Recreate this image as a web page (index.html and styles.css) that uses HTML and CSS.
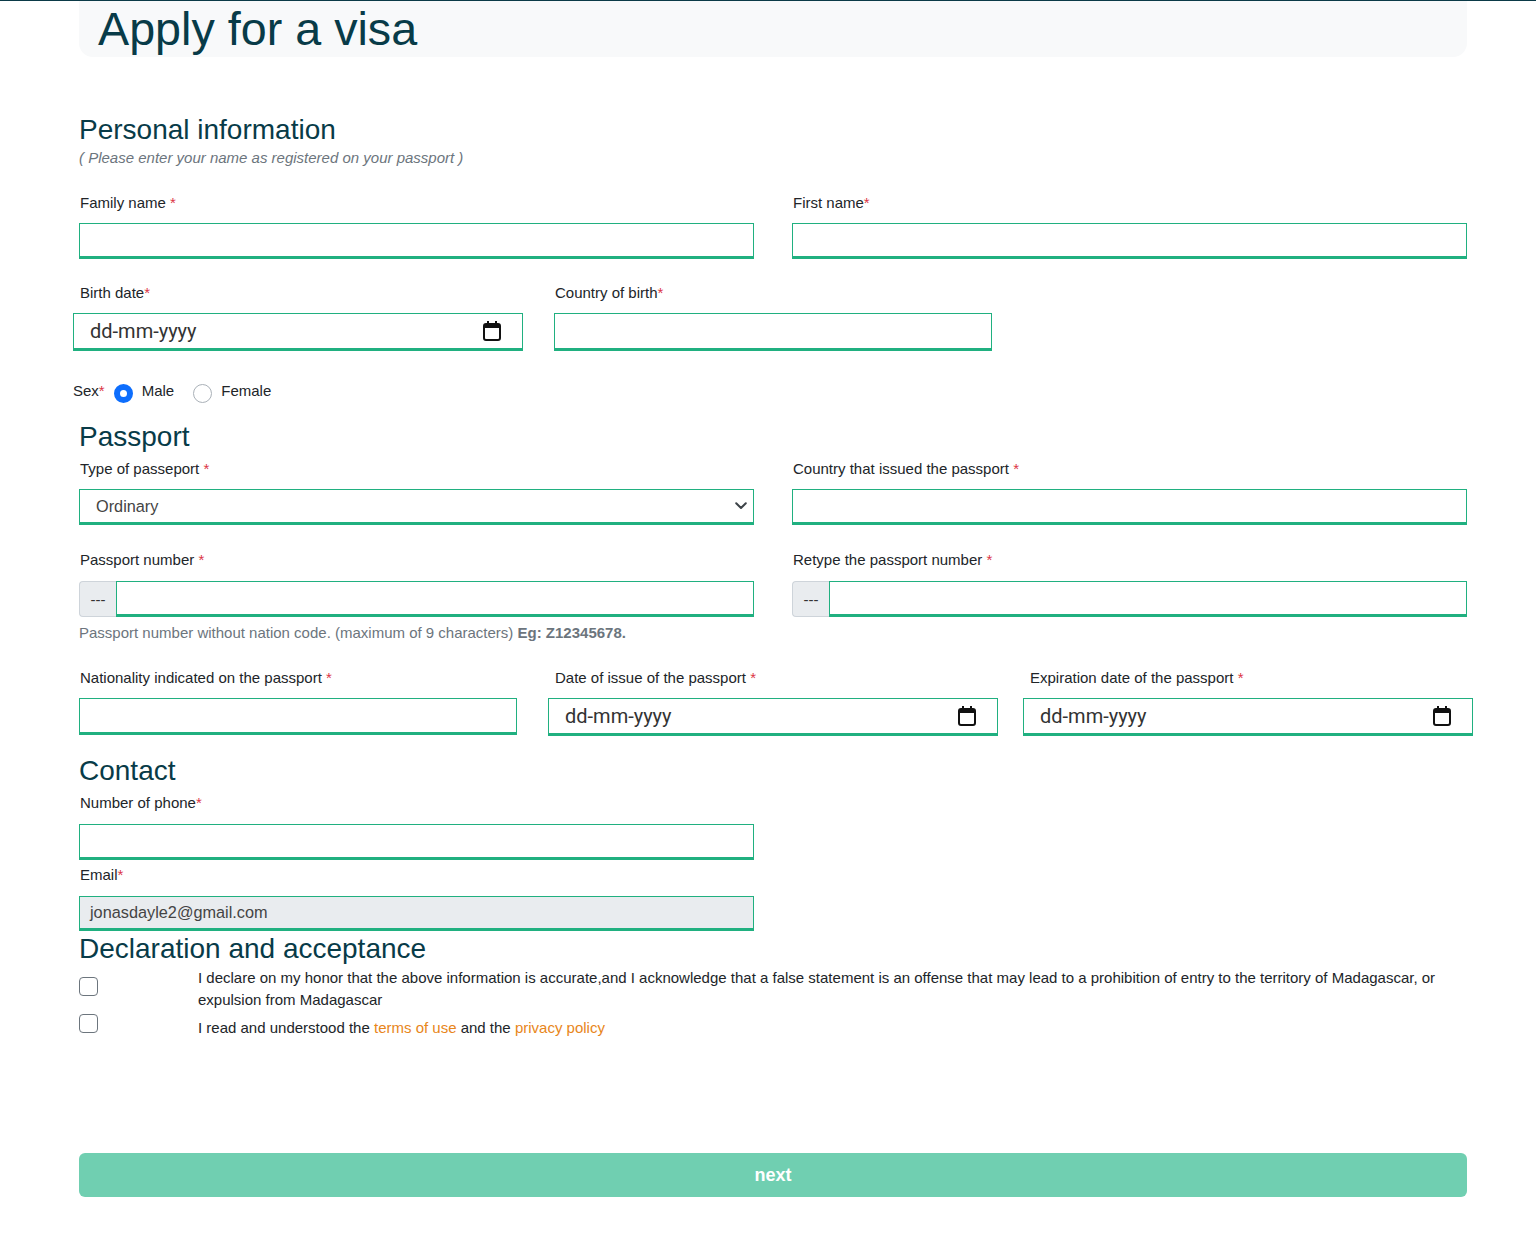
FILE: index.html
```html
<!DOCTYPE html>
<html lang="en">
<head>
<meta charset="utf-8">
<title>Apply for a visa</title>
<link rel="stylesheet" href="styles.css">
</head>
<body>
<div class="topline"></div>
<div class="page">
  <header class="hero"><h1 class="hero-title">Apply for a visa</h1></header>

  <h2 class="sec sec-personal">Personal information</h2>
  <p class="hint">( Please enter your name as registered on your passport )</p>

  <div class="row two r1">
    <div class="col">
      <label class="lbl">Family name <span class="req">*</span></label>
      <div class="field w675"></div>
    </div>
    <div class="col">
      <label class="lbl">First name<span class="req">*</span></label>
      <div class="field w675"></div>
    </div>
  </div>

  <div class="row three r2">
    <div class="col">
      <label class="lbl">Birth date<span class="req">*</span></label>
      <div class="field date">
        <span class="ph">dd-mm-yyyy</span>
        <svg class="cal" width="20" height="22" viewBox="0 0 20 22"><rect x="2" y="4" width="16" height="16" rx="2" fill="none" stroke="#111" stroke-width="2"/><rect x="2" y="4" width="16" height="4" fill="#111"/><rect x="5" y="1" width="2" height="4" fill="#111"/><rect x="13" y="1" width="2" height="4" fill="#111"/></svg>
      </div>
    </div>
    <div class="col">
      <label class="lbl">Country of birth<span class="req">*</span></label>
      <div class="field w438 h38"></div>
    </div>
  </div>

  <div class="sex">
    <span class="sex-lbl">Sex<span class="req">*</span></span>
    <span class="radio on"></span><span class="opt">Male</span>
    <span class="radio"></span><span class="opt">Female</span>
  </div>

  <h2 class="sec sec-passport">Passport</h2>

  <div class="row two r3">
    <div class="col">
      <label class="lbl">Type of passeport <span class="req">*</span></label>
      <div class="field w675 select"><span class="val">Ordinary</span>
        <svg class="chev" width="12" height="8" viewBox="0 0 12 8"><path d="M1.2 1.2 6 6l4.8-4.8" fill="none" stroke="#3d4348" stroke-width="2" stroke-linecap="round" stroke-linejoin="round"/></svg>
      </div>
    </div>
    <div class="col">
      <label class="lbl">Country that issued the passport <span class="req">*</span></label>
      <div class="field w675"></div>
    </div>
  </div>

  <div class="row two r4">
    <div class="col">
      <label class="lbl">Passport number <span class="req">*</span></label>
      <div class="group"><span class="prefix">---</span><div class="field gfield"></div></div>
    </div>
    <div class="col">
      <label class="lbl">Retype the passport number <span class="req">*</span></label>
      <div class="group"><span class="prefix">---</span><div class="field gfield"></div></div>
    </div>
  </div>
  <p class="help">Passport number without nation code. (maximum of 9 characters) <b>Eg: Z12345678.</b></p>

  <div class="row three r5">
    <div class="col">
      <label class="lbl">Nationality indicated on the passport <span class="req">*</span></label>
      <div class="field w438 h37 nat"></div>
    </div>
    <div class="col">
      <label class="lbl">Date of issue of the passport <span class="req">*</span></label>
      <div class="field date">
        <span class="ph">dd-mm-yyyy</span>
        <svg class="cal" width="20" height="22" viewBox="0 0 20 22"><rect x="2" y="4" width="16" height="16" rx="2" fill="none" stroke="#111" stroke-width="2"/><rect x="2" y="4" width="16" height="4" fill="#111"/><rect x="5" y="1" width="2" height="4" fill="#111"/><rect x="13" y="1" width="2" height="4" fill="#111"/></svg>
      </div>
    </div>
    <div class="col">
      <label class="lbl">Expiration date of the passport <span class="req">*</span></label>
      <div class="field date">
        <span class="ph">dd-mm-yyyy</span>
        <svg class="cal" width="20" height="22" viewBox="0 0 20 22"><rect x="2" y="4" width="16" height="16" rx="2" fill="none" stroke="#111" stroke-width="2"/><rect x="2" y="4" width="16" height="4" fill="#111"/><rect x="5" y="1" width="2" height="4" fill="#111"/><rect x="13" y="1" width="2" height="4" fill="#111"/></svg>
      </div>
    </div>
  </div>

  <h2 class="sec sec-contact">Contact</h2>
  <label class="lbl lbl-phone">Number of phone<span class="req">*</span></label>
  <div class="field w675 phone"></div>
  <label class="lbl lbl-email">Email<span class="req">*</span></label>
  <div class="field w675 email"><span class="val">jonasdayle2@gmail.com</span></div>

  <h2 class="sec sec-decl">Declaration and acceptance</h2>
  <div class="check-row c1">
    <span class="box"></span>
    <p class="ctext">I declare on my honor that the above information is accurate,and I acknowledge that a false statement is an offense that may lead to a prohibition of entry to the territory of Madagascar, or expulsion from Madagascar</p>
  </div>
  <div class="check-row c2">
    <span class="box"></span>
    <p class="ctext">I read and understood the <a class="lnk" href="#">terms of use</a> and the <a class="lnk" href="#">privacy policy</a></p>
  </div>

  <button class="next" type="button">next</button>
</div>
</body>
</html>
```

FILE: styles.css
```css
* { box-sizing: border-box; }
html, body { margin: 0; padding: 0; background: #fff; }
body {
  font-family: "Liberation Sans", Arial, sans-serif;
  color: #212529;
  font-size: 15px;
}
.topline { height: 1px; background: #0b3a47; }
.page { width: 1388px; margin-left: 79px; padding-bottom: 37px; }

.hero {
  height: 56px;
  background: #f8f9fa;
  border-radius: 0 0 14px 14px;
  padding-left: 19px;
}
.hero-title {
  margin: 0;
  font-weight: 400;
  font-size: 46.7px;
  line-height: 56px;
  color: #083b48;
}

.sec {
  margin: 0;
  font-weight: 400;
  font-size: 28px;
  line-height: 34px;
  color: #083b48;
}
.sec-personal { margin-top: 56px; }
.sec-passport { margin-top: 19px; }
.sec-contact { margin-top: 18px; }
.sec-decl { margin-top: 1px; }

.hint {
  margin: 1px 0 0;
  font-size: 15px;
  line-height: 20px;
  font-style: italic;
  color: #6c757d;
}

.row { display: grid; }
.two { grid-template-columns: 713px 675px; }
.three { grid-template-columns: 475px 475px 475px; }
.r1 { margin-top: 24px; }
.r2 { margin-top: 23px; }
.r3 { margin-top: 4px; }
.r4 { margin-top: 24px; }
.r5 { margin-top: 23px; }

.lbl {
  display: block;
  line-height: 22px;
  height: 22px;
  margin-bottom: 9px;
  padding-left: 1px;
}
.r4 .lbl { margin-bottom: 10px; }
.req { color: #dc3545; }

.field {
  border: 1px solid #20b080;
  border-bottom-width: 3px;
  background: #fff;
  height: 36px;
  display: flex;
  align-items: center;
}
.w675 { width: 675px; }
.w438 { width: 438px; }
.h38 { height: 38px; }
.h37 { height: 37px; }

.date {
  width: 450px;
  height: 38px;
  margin-left: -6px;
  padding: 0 20px 0 16px;
  justify-content: space-between;
}
.ph { font-family: Roboto, "Liberation Sans", sans-serif; font-size: 20px; color: #333; }
.cal { display: block; margin-top: -1px; }

.select { padding: 0 6px 0 16px; justify-content: space-between; }
.val { font-size: 16.3px; color: #444; }
.chev { display: block; }

.sex {
  margin-top: 28px;
  margin-left: -6px;
  height: 22px;
  display: flex;
  align-items: center;
}
.sex-lbl { margin-right: 9px; }
.radio {
  width: 19px;
  height: 19px;
  border-radius: 50%;
  border: 1px solid #aab1b8;
  background: #fff;
  margin-top: 6px;
  margin-right: 9px;
}
.radio.on {
  border: 6px solid #0d6efd;
  background: #fff;
}
.opt { margin-right: 19px; }

.group { display: flex; width: 675px; }
.prefix {
  width: 37px;
  height: 36px;
  background: #e9ecef;
  border: 1px solid #ced4da;
  border-right: 0;
  border-radius: 4px 0 0 4px;
  font-size: 15px;
  color: #333;
  display: flex;
  align-items: center;
  justify-content: center;
  padding-top: 1px;
}
.gfield { flex: 1; }

.help {
  margin: 5px 0 0;
  line-height: 22px;
  font-size: 15px;
  color: #6c757d;
}
.help b { font-weight: 700; color: #6c757d; }

.lbl-phone { margin-top: 4px; margin-bottom: 10px; }
.phone { height: 36px; }
.lbl-email { margin-top: 4px; margin-bottom: 10px; }
.email { height: 35px; background: #e9ecef; padding-left: 10px; }

.check-row {
  display: grid;
  grid-template-columns: 119px 1fr;
}
.c1 { margin-top: 1px; }
.c2 { margin-top: 6px; }
.box {
  width: 19px;
  height: 19px;
  border: 1px solid #6c757d;
  border-radius: 4px;
  background: #fff;
}
.c1 .box { margin-top: 10px; }
.c2 .box { margin-top: -3px; }
.ctext { margin: 0; line-height: 22px; font-size: 15px; }
.lnk { color: #e8861a; text-decoration: none; }

.next {
  display: block;
  width: 1388px;
  height: 44px;
  margin-top: 114px;
  border: 0;
  border-radius: 6px;
  background: #70cfb1;
  color: #fff;
  font-family: "Liberation Sans", Arial, sans-serif;
  font-weight: 700;
  font-size: 18px;
}
```
